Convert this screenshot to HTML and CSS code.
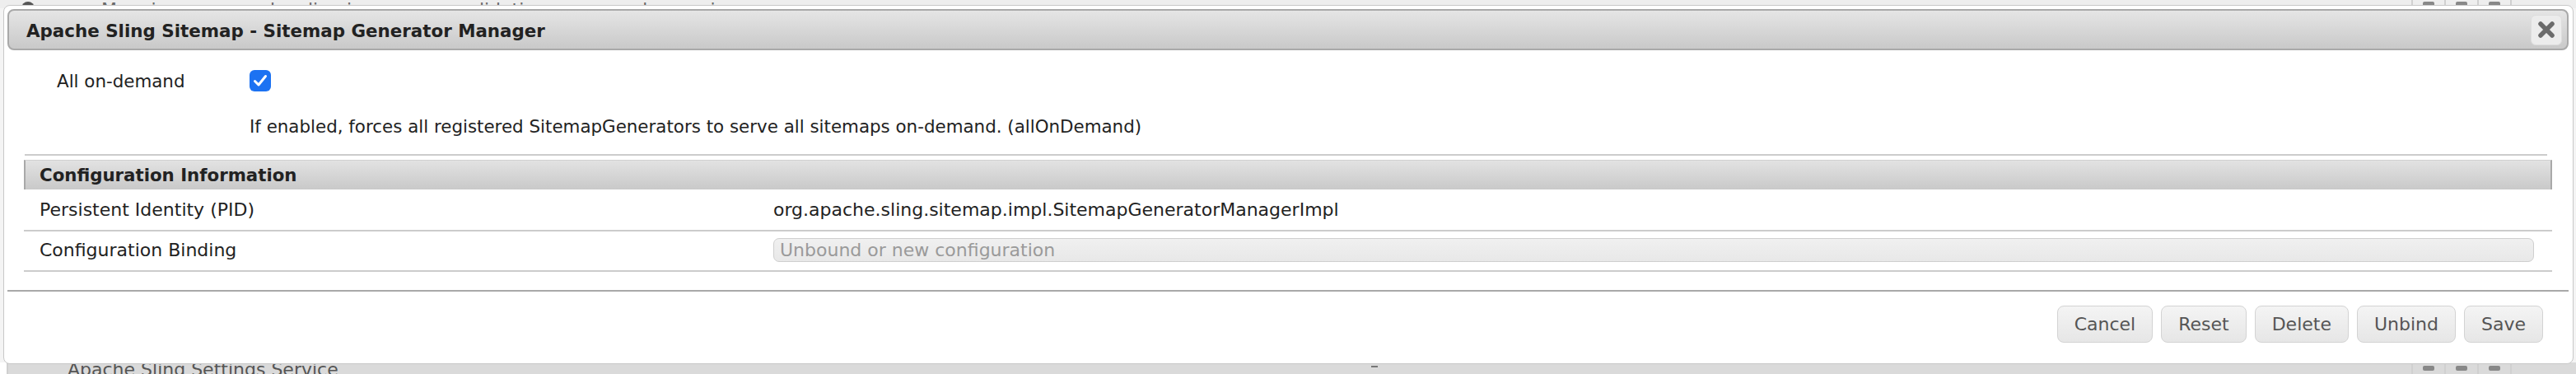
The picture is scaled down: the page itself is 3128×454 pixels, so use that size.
FILE: index.html
```html
<!DOCTYPE html>
<html lang="en">
<head>
<meta charset="utf-8">
<title>Apache Sling Sitemap - Sitemap Generator Manager</title>
<link rel="stylesheet" href="styles.css">
</head>
<body>
<div class="page">
  <div class="bg-row bg-top">
    <span class="bg-dot"></span>
    <span class="bg-caret">▸</span>
    <span class="bg-text">Mapping: org.apache.sling.jcr.resource.validation=user-reader-service</span>
    <span class="bg-spacer"></span>
    <span class="bg-actions">
      <span class="bg-act"><span class="bg-ico"></span></span>
      <span class="bg-act"><span class="bg-ico"></span></span>
      <span class="bg-act"><span class="bg-ico"></span></span>
    </span>
  </div>
  <div class="bg-fill"></div>
  <div class="bg-row bg-bottom">
    <span class="bg-text bg-text-bottom">Apache Sling Settings Service</span>
    <span class="bg-spacer"></span>
    <span class="bg-dash"></span>
    <span class="bg-spacer"></span>
    <span class="bg-actions">
      <span class="bg-act"><span class="bg-ico"></span></span>
      <span class="bg-act"><span class="bg-ico"></span></span>
      <span class="bg-act"><span class="bg-ico"></span></span>
    </span>
  </div>
</div>

<div class="dialog">
  <div class="titlebar">
    <span class="title">Apache Sling Sitemap - Sitemap Generator Manager</span>
    <button class="close" type="button" aria-label="close">
      <svg width="22" height="20" viewBox="0 0 22 20"><path d="M4 3 L18 17 M18 3 L4 17" stroke="#6b6b6b" stroke-width="5.5" stroke-linecap="round"/></svg>
    </button>
  </div>

  <div class="content">
    <div class="prop">
      <div class="prop-label">All on-demand</div>
      <div class="prop-input">
        <span class="checkbox">
          <svg width="18" height="16" viewBox="0 0 18 16"><path d="M2.5 8.5 L7 13 L15.5 2.5" fill="none" stroke="#fff" stroke-width="3" stroke-linecap="round" stroke-linejoin="round"/></svg>
        </span>
        <div class="prop-desc">If enabled, forces all registered SitemapGenerators to serve all sitemaps on-demand. (allOnDemand)</div>
      </div>
    </div>

    <div class="sep"></div>

    <div class="info">
      <div class="info-head">Configuration Information</div>
      <div class="info-row info-row-pid">
        <div class="info-label">Persistent Identity (PID)</div>
        <div class="info-value">org.apache.sling.sitemap.impl.SitemapGeneratorManagerImpl</div>
      </div>
      <div class="info-row info-row-binding">
        <div class="info-label">Configuration Binding</div>
        <div class="info-value"><div class="binding">Unbound or new configuration</div></div>
      </div>
    </div>
  </div>

  <div class="buttonpane">
    <button class="btn" type="button">Cancel</button>
    <button class="btn" type="button">Reset</button>
    <button class="btn" type="button">Delete</button>
    <button class="btn" type="button">Unbind</button>
    <button class="btn" type="button">Save</button>
  </div>
</div>
</body>
</html>
```

FILE: styles.css
```css
html, body {
  margin: 0;
  padding: 0;
}
body {
  width: 3128px;
  height: 454px;
  overflow: hidden;
  background: #ffffff;
  font-family: "DejaVu Sans", Verdana, "Liberation Sans", sans-serif;
  font-size: 22px;
  color: #222222;
  position: relative;
}

/* page behind the dialog */
.page {
  height: 454px;
  display: flex;
  flex-direction: column;
}
.bg-row {
  display: flex;
  align-items: flex-end;
  overflow: hidden;
  color: #6a6a6a;
}
.bg-top {
  height: 10px;
  background: #eeeeee;
}
.bg-fill {
  flex: 1;
  background: #f4f4f4;
}
.bg-bottom {
  height: 14px;
  background: #dadada;
  align-items: flex-start;
  border-left: 2px solid #cfcfcf;
  margin-left: 8px;
}
.bg-dot {
  width: 16px;
  height: 16px;
  border-radius: 50%;
  background: #555;
  margin-left: 26px;
  margin-bottom: -8px;
}
.bg-caret {
  margin-left: 62px;
  line-height: 22px;
  margin-bottom: -14px;
  font-size: 18px;
}
.bg-text {
  line-height: 22px;
  margin-bottom: -13px;
  margin-left: 10px;
  white-space: nowrap;
}
.bg-text-bottom {
  margin-left: 72px;
  margin-bottom: 0;
  margin-top: -2px;
  color: #555;
}
.bg-spacer { flex: 1; }
.bg-dash {
  width: 8px;
  height: 2px;
  background: #777;
  margin-top: 4px;
}
.bg-actions {
  display: flex;
  align-self: stretch;
  margin-right: 78px;
}
.bg-act {
  width: 38px;
  border-left: 2px solid #d0d0d0;
  display: flex;
  justify-content: center;
}
.bg-act:last-child { border-right: 2px solid #d0d0d0; }
.bg-ico {
  width: 14px;
  height: 6px;
  background: #888;
  border-radius: 2px;
}
.bg-top .bg-ico { align-self: flex-end; margin-bottom: 2px; }
.bg-bottom .bg-ico { align-self: flex-start; margin-top: 4px; }

/* dialog overlay */
.dialog {
  position: absolute;
  left: 4px;
  top: 6px;
  width: 3121px;
  height: 436px;
  box-sizing: border-box;
  background: #ffffff;
  border: 1px solid #c8c8c8;
  border-radius: 8px;
  padding: 4px 5px 4px 4px;
  display: flex;
  flex-direction: column;
}

.titlebar {
  height: 50px;
  box-sizing: border-box;
  border: 2px solid #a9a9a9;
  border-radius: 8px;
  background: linear-gradient(#e5e5e5, #c9c9c9);
  display: flex;
  align-items: center;
  justify-content: space-between;
  padding: 0 6px 0 21px;
}
.title {
  font-weight: bold;
  color: #222222;
  font-size: 21.4px;
  padding-top: 2px;
}
.close {
  width: 38px;
  height: 37px;
  box-sizing: border-box;
  border: 1px solid #dddddd;
  border-radius: 6px;
  background: #ececec;
  display: flex;
  align-items: center;
  justify-content: center;
  padding: 0;
}

.content {
  flex: 1;
  padding: 0 20px 0 20px;
}

.prop {
  display: flex;
  margin-top: 24px;
  font-size: 21.4px;
}
.prop-label {
  width: 274px;
  box-sizing: border-box;
  padding-left: 40px;
  line-height: 26px;
  padding-top: 1px;
}
.prop-input {
  display: flex;
  flex-direction: column;
  align-items: flex-start;
}
.checkbox {
  width: 26px;
  height: 26px;
  border-radius: 6px;
  background: #1c72f2;
  display: flex;
  align-items: center;
  justify-content: center;
}
.prop-desc {
  margin-top: 30px;
  line-height: 26px;
}

.sep {
  height: 2px;
  background: #cccccc;
  margin: 20px 6px 5px 1px;
}

.info-head {
  height: 36px;
  box-sizing: border-box;
  display: flex;
  align-items: center;
  padding-left: 17px;
  font-weight: bold;
  font-size: 21.3px;
  background: linear-gradient(#e2e2e2, #c9c9c9);
  border-left: 2px solid #a9a9a9;
  border-right: 2px solid #a9a9a9;
  border-top: 1px solid #d0d0d0;
}
.info-row {
  display: flex;
  align-items: center;
  border-bottom: 2px solid #cccccc;
}
.info-row-pid { height: 49px; }
.info-row-binding { height: 49px; padding-bottom: 2px; box-sizing: border-box; }
.info-label {
  width: 910px;
  box-sizing: border-box;
  padding-left: 19px;
}
.info-value {
  flex: 1;
  padding-right: 22px;
}
.binding {
  height: 29px;
  box-sizing: border-box;
  border: 1px solid #cfcfcf;
  border-radius: 7px;
  background: linear-gradient(#f0f0f0, #e8e8e8);
  color: #9a9a9a;
  line-height: 27px;
  padding-left: 7px;
}

.buttonpane {
  border-top: 2px solid #a9a9a9;
  height: 85px;
  box-sizing: border-box;
  display: flex;
  justify-content: flex-end;
  align-items: flex-start;
  gap: 10px;
  padding: 17px 31px 0 0;
}
.btn {
  height: 45px;
  box-sizing: border-box;
  border: 1px solid #d3d3d3;
  border-radius: 8px;
  background: linear-gradient(#f4f4f4, #e6e6e6);
  color: #555555;
  font-family: "DejaVu Sans", Verdana, sans-serif;
  font-size: 22px;
  padding: 0 20px;
}
```
